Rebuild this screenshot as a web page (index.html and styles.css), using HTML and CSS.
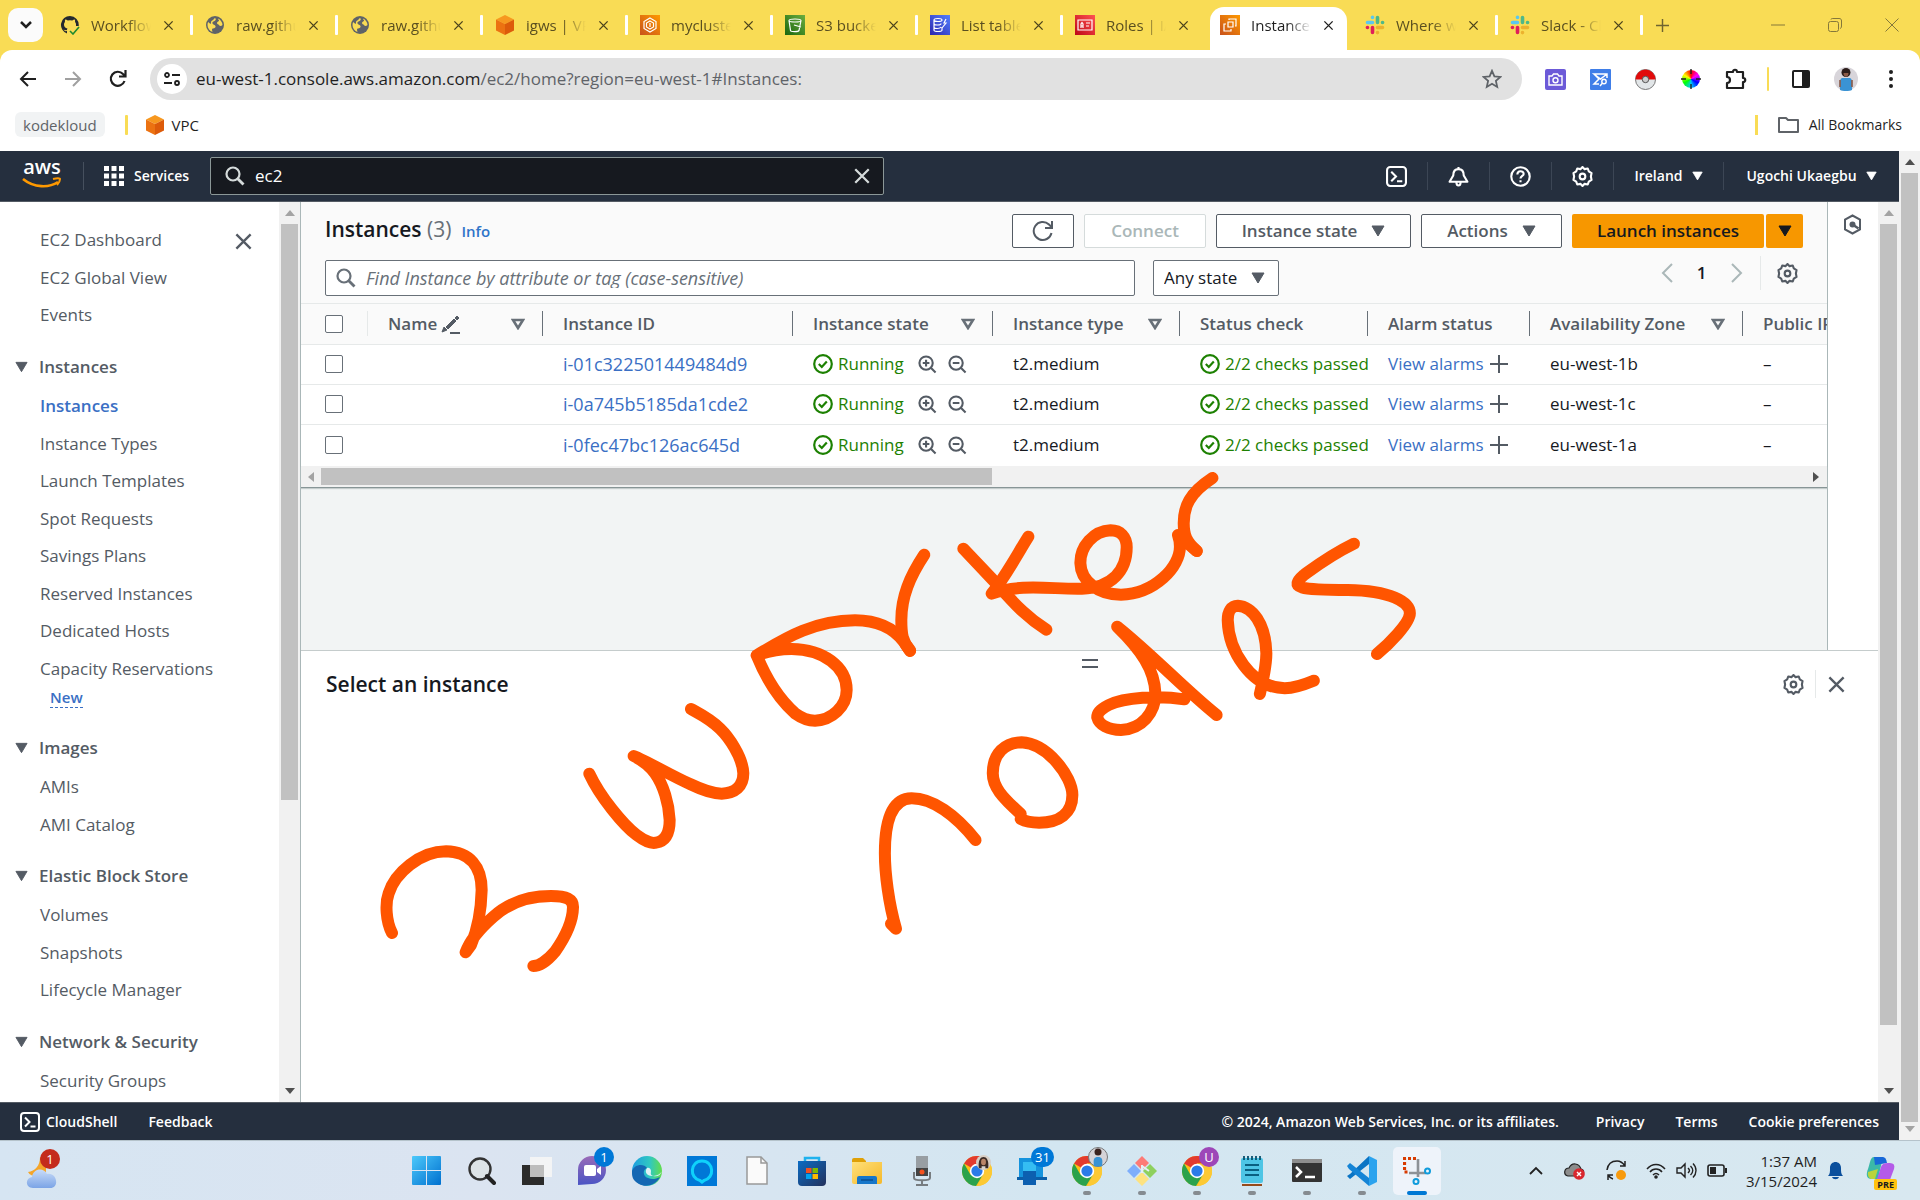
FILE: index.html
```html
<!DOCTYPE html>
<html lang="en">
<head>
<meta charset="utf-8">
<title>Instances | EC2 | eu-west-1</title>
<link rel="stylesheet" href="styles.css">
</head>
<body>
<svg class="defs" aria-hidden="true">
  <defs>
    <linearGradient id="orange" x1="0" y1="1" x2="1" y2="0"><stop offset="0" stop-color="#c8511b"/><stop offset="1" stop-color="#f90"/></linearGradient>
    <linearGradient id="green" x1="0" y1="1" x2="1" y2="0"><stop offset="0" stop-color="#1b660f"/><stop offset="1" stop-color="#6cae3e"/></linearGradient>
    <linearGradient id="blue" x1="0" y1="1" x2="1" y2="0"><stop offset="0" stop-color="#2e27ad"/><stop offset="1" stop-color="#527fff"/></linearGradient>
    <linearGradient id="red" x1="0" y1="1" x2="1" y2="0"><stop offset="0" stop-color="#bd0816"/><stop offset="1" stop-color="#ff5252"/></linearGradient>
    <linearGradient id="win" x1="0" y1="0" x2="1" y2="1"><stop offset="0" stop-color="#4cc9fb"/><stop offset="1" stop-color="#0070cf"/></linearGradient>
    <linearGradient id="violet" x1="0" y1="0" x2="0" y2="1"><stop offset="0" stop-color="#9a6bb8"/><stop offset="1" stop-color="#4a54c4"/></linearGradient>
    <linearGradient id="edgeG" x1="0" y1="0" x2="1" y2="0"><stop offset="0" stop-color="#1b9de2"/><stop offset=".6" stop-color="#31c8c0"/><stop offset="1" stop-color="#63dd4a"/></linearGradient>
    <linearGradient id="bag" x1="0" y1="0" x2="1" y2="1"><stop offset="0" stop-color="#0a6cc4"/><stop offset="1" stop-color="#24315c"/></linearGradient>
    <linearGradient id="folderG" x1="0" y1="0" x2="1" y2="1"><stop offset="0" stop-color="#ffe07a"/><stop offset="1" stop-color="#f5b82a"/></linearGradient>
    <linearGradient id="cloudG" x1="0" y1="0" x2="0" y2="1"><stop offset="0" stop-color="#c9dcf8"/><stop offset="1" stop-color="#7ba4e6"/></linearGradient>
    <symbol id="close" viewBox="0 0 16 16"><path d="M2 2l12 12M14 2L2 14" fill="none" stroke="currentColor" stroke-width="2"/></symbol>
    <symbol id="down" viewBox="0 0 14 12"><path d="M1 1h12L7 11z" fill="currentColor" stroke="currentColor" stroke-width="1" stroke-linejoin="round"/></symbol>
    <symbol id="sort" viewBox="0 0 14 12"><path d="M2 2h10L7 10z" fill="none" stroke="currentColor" stroke-width="2.600"/></symbol>
    <symbol id="scroll-up" viewBox="0 0 10 6"><path d="M0 6L5 0l5 6z" fill="currentColor"/></symbol>
    <symbol id="search" viewBox="0 0 20 20"><circle cx="8" cy="8" r="6.500" fill="none" stroke="currentColor" stroke-width="2.200"/><path d="M12.500 12.500L18.500 18.500" stroke="currentColor" stroke-width="2.800"/></symbol>
    <symbol id="gear" viewBox="0 0 20 20"><path d="M10 1l2 2 3-.6 1 2.800 2.600 1.600L18 10l.6 3.200-2.600 1.600-1 2.800-3-.6-2 2-2-2-3 .6-1-2.800-2.600-1.600L2 10l-.6-3.200L4 5.200l1-2.800 3 .6z" fill="none" stroke="currentColor" stroke-width="2" stroke-linejoin="round"/><circle cx="10" cy="10" r="2.700" fill="none" stroke="currentColor" stroke-width="2"/></symbol>
    <symbol id="shell" viewBox="0 0 20 20"><rect x="1" y="1" width="18" height="18" rx="3" fill="none" stroke="currentColor" stroke-width="2"/><path d="M5 5.500l4.500 4.500L5 14.500M10.500 14.500h5" fill="none" stroke="currentColor" stroke-width="2"/></symbol>
    <symbol id="ok" viewBox="0 0 20 20"><circle cx="10" cy="10" r="8.800" fill="none" stroke="currentColor" stroke-width="2.200"/><path d="M5.800 10l3 3 5-5.500" fill="none" stroke="currentColor" stroke-width="2.200"/></symbol>
    <symbol id="zin" viewBox="0 0 20 20"><circle cx="8.500" cy="8.500" r="7" fill="none" stroke="currentColor" stroke-width="2.200"/><path d="M13.500 13.500l5 5M5 8.500h7M8.500 5v7" stroke="currentColor" stroke-width="2.200"/></symbol>
    <symbol id="zout" viewBox="0 0 20 20"><circle cx="8.500" cy="8.500" r="7" fill="none" stroke="currentColor" stroke-width="2.200"/><path d="M13.500 13.500l5 5M5 8.500h7" stroke="currentColor" stroke-width="2.200"/></symbol>
    <symbol id="plus" viewBox="0 0 18 18"><path d="M9 0v18M0 9h18" stroke="currentColor" stroke-width="2"/></symbol>
    <symbol id="globe" viewBox="0 0 20 20"><circle cx="10" cy="10" r="9" fill="#5f6368"/><path d="M9.500 3.200c2 0 1.500 2 0 2.800S7 7 7.500 8.500 10 9.500 10.500 11s-1 2.500-2.500 2.500-1 2-.5 3.500c-3-1-5-4-5-7 0-1 .2-2 .6-3L5.500 9c1-1 0-2 1-3s2-1 3-2.800zM13 3.500c2.500 1 4.500 4 4.500 6.500-1.500 1.500-3 1-3.500 0s-2-.5-2-2 1.500-1.500 2-2-1-1.500-1-2.500z" fill="#f9dc55"/></symbol>
    <symbol id="cube" viewBox="0 0 20 20"><path d="M10 0l9 4.500L10 9 1 4.500z" fill="#f7981f"/><path d="M1 4.500L10 9v11l-9-4.500z" fill="#ec7211"/><path d="M19 4.500L10 9v11l9-4.500z" fill="#dd5b0a"/></symbol>
    <symbol id="slack" viewBox="0 0 20 20"><g stroke-width="3.600" stroke-linecap="round"><path d="M2.500 7.500h5M7.500 2.300v.2" stroke="#5bc8ef"/><path d="M12.500 2.500v5M17.500 7.500h.1" stroke="#4fb888"/><path d="M12.500 12.500h5M12.500 17.500v.1" stroke="#ecb22e"/><path d="M7.500 12.500v5M2.400 12.500h.1" stroke="#e01e5a"/></g></symbol>
    <symbol id="chrome" viewBox="0 0 30 30"><circle cx="15" cy="15" r="15" fill="#fbc116"/><path d="M15 15L2 7.500A15 15 0 0 1 28 7.500H15z" fill="#e33b2e"/><path d="M2 7.500A15 15 0 0 0 14 30l7-11.500L15 15 8.500 18.700z" fill="#2ba24c"/><path d="M28 7.500H15l6.500 11L15 30A15 15 0 0 0 28 7.500z" fill="#fcc934"/><circle cx="15" cy="15" r="7.200" fill="#fff"/><circle cx="15" cy="15" r="5.600" fill="#2a7be8"/></symbol>
  </defs>
</svg>

<header class="browser">
  <div class="tabstrip">
    <button class="tab-menu" aria-label="Search tabs"><svg width="12" height="8" viewBox="0 0 12 8"><path d="M1 1l5 5 5-5" fill="none" stroke="#1f1f1f" stroke-width="2.500"/></svg></button>
    <div class="tabs">
      <div class="tab"><svg class="fav" viewBox="0 0 20 20"><path d="M10 1a9 9 0 0 0-3 17.500V16c-2 .5-3-.5-3.500-1.500 1 .3 2 1 3.500.5 0-.8.200-1.200.5-1.500C5 13 4 11.500 4 9.500c0-1 .3-1.900 1-2.500-.2-.8-.1-1.700.2-2.500 1 0 1.800.5 2.500 1a9 9 0 0 1 4.600 0c.7-.5 1.500-1 2.500-1 .3.800.4 1.700.2 2.500.7.600 1 1.500 1 2.500v1.500h2.700A9 9 0 0 0 10 1z" fill="#24292f"/><path d="M10 16l3 3 6-7" fill="none" stroke="#1f8a2f" stroke-width="1.600"/></svg><span class="tab-title">Workflow runs</span><button class="tab-x" aria-label="Close tab"><svg width="11" height="11"><use href="#close"/></svg></button></div>
      <div class="tab"><svg class="fav"><use href="#globe"/></svg><span class="tab-title">raw.githubuser</span><button class="tab-x" aria-label="Close tab"><svg width="11" height="11"><use href="#close"/></svg></button></div>
      <div class="tab"><svg class="fav"><use href="#globe"/></svg><span class="tab-title">raw.githubuser</span><button class="tab-x" aria-label="Close tab"><svg width="11" height="11"><use href="#close"/></svg></button></div>
      <div class="tab"><svg class="fav"><use href="#cube"/></svg><span class="tab-title">igws | VPC</span><button class="tab-x" aria-label="Close tab"><svg width="11" height="11"><use href="#close"/></svg></button></div>
      <div class="tab"><svg class="fav" viewBox="0 0 20 20"><path d="M0 0h20v20H0z" fill="url(#orange)"/><path d="M10 3l6 3.500v7L10 17l-6-3.500v-7zM10 6l3.500 2v4L10 14l-3.500-2V8zM10 8v4" fill="none" stroke="#fff" stroke-width="1.200"/></svg><span class="tab-title">mycluster</span><button class="tab-x" aria-label="Close tab"><svg width="11" height="11"><use href="#close"/></svg></button></div>
      <div class="tab"><svg class="fav" viewBox="0 0 20 20"><path d="M0 0h20v20H0z" fill="url(#green)"/><path d="M4 5.500c0-2 12-2 12 0s-12 2-12 0l1.500 10c0 1.500 8 1.500 8.500 0l2-10M9 10l7 2" fill="none" stroke="#fff" stroke-width="1.200"/></svg><span class="tab-title">S3 buckets</span><button class="tab-x" aria-label="Close tab"><svg width="11" height="11"><use href="#close"/></svg></button></div>
      <div class="tab"><svg class="fav" viewBox="0 0 20 20"><path d="M0 0h20v20H0z" fill="url(#blue)"/><path d="M4 5c0-2 8-2 8 0s-8 2-8 0v10c0 2 8 2 8 0v-3M4 8.500c0 2 7 2 7 0M4 12c0 2 6 2 7 0M16 4l-2 4h2l-4 5" fill="none" stroke="#fff" stroke-width="1.200"/></svg><span class="tab-title">List tables</span><button class="tab-x" aria-label="Close tab"><svg width="11" height="11"><use href="#close"/></svg></button></div>
      <div class="tab before-active"><svg class="fav" viewBox="0 0 20 20"><path d="M0 0h20v20H0z" fill="url(#red)"/><path d="M3 5h14v10H3zM6 13v-4l1-1.500L8 9v4M6 11h2M11 8h4M11 11h3" fill="none" stroke="#fff" stroke-width="1.200"/></svg><span class="tab-title">Roles | IAM</span><button class="tab-x" aria-label="Close tab"><svg width="11" height="11"><use href="#close"/></svg></button></div>
      <div class="tab active"><svg class="fav" viewBox="0 0 20 20"><path d="M0 0h20v20H0z" fill="url(#orange)"/><path d="M8 7h5v5H8zM6 9H4v7h7v-2M9 5V4h7v7h-1" fill="none" stroke="#fff" stroke-width="1.200"/></svg><span class="tab-title">Instances</span><button class="tab-x" aria-label="Close tab"><svg width="11" height="11"><use href="#close"/></svg></button></div>
      <div class="tab"><svg class="fav"><use href="#slack"/></svg><span class="tab-title">Where work</span><button class="tab-x" aria-label="Close tab"><svg width="11" height="11"><use href="#close"/></svg></button></div>
      <div class="tab"><svg class="fav"><use href="#slack"/></svg><span class="tab-title">Slack - Cloud</span><button class="tab-x" aria-label="Close tab"><svg width="11" height="11"><use href="#close"/></svg></button></div>
    </div>
    <button class="new-tab" aria-label="New tab"><svg width="13" height="13" viewBox="0 0 18 18"><use href="#plus"/></svg></button>
    <div class="window-controls">
      <button aria-label="Minimise"><svg width="14" height="14" viewBox="0 0 14 14"><path d="M0 7h14" stroke="currentColor"/></svg></button>
      <button aria-label="Restore"><svg width="14" height="14" viewBox="0 0 14 14"><rect x=".5" y="3.500" width="10" height="10" rx="2" fill="none" stroke="currentColor"/><path d="M3 1.500c0-1 1-1 2-1h6c2 0 2.500 1 2.500 2.500v5c0 2-1 2.500-1.500 2.500" fill="none" stroke="currentColor"/></svg></button>
      <button aria-label="Close"><svg width="14" height="14" viewBox="0 0 14 14"><path d="M.5.5l13 13M13.500.5l-13 13" stroke="currentColor"/></svg></button>
    </div>
  </div>

  <div class="toolbar">
    <div class="nav-buttons">
      <button aria-label="Back"><svg width="18" height="18" viewBox="0 0 18 18"><path d="M17 9H2M9 2L2 9l7 7" fill="none" stroke="#1f1f1f" stroke-width="2"/></svg></button>
      <button aria-label="Forward"><svg width="18" height="18" viewBox="0 0 18 18"><path d="M1 9h15M9 2l7 7-7 7" fill="none" stroke="#a0a0a0" stroke-width="2"/></svg></button>
      <button aria-label="Reload"><svg width="18" height="18" viewBox="0 0 18 18"><path d="M15.500 11A7 7 0 1 1 14 4l2 2M16.500 0v6.500H10" fill="none" stroke="#1f1f1f" stroke-width="2.200"/></svg></button>
    </div>
    <div class="omnibox">
      <button class="site-info" aria-label="Site information"><svg width="16" height="14" viewBox="0 0 16 14"><g fill="none" stroke="#1f1f1f" stroke-width="1.800"><circle cx="3" cy="3" r="2"/><circle cx="13" cy="11" r="2"/><path d="M8 3h8M0 11h8"/></g></svg></button>
      <a class="url" href="#"><span class="host">eu-west-1.console.aws.amazon.com</span>/ec2/home?region=eu-west-1#Instances:</a>
      <button class="star" aria-label="Bookmark"><svg width="20" height="20" viewBox="0 0 20 20"><path d="M10 1.800l2.400 5.600 6 .5-4.500 4 1.300 6L10 14.700 4.800 17.900l1.300-6-4.500-4 6-.5z" fill="none" stroke="#5f6368" stroke-width="1.800"/></svg></button>
    </div>
    <div class="extensions">
      <button aria-label="Screen capture"><svg width="21" height="21" viewBox="0 0 21 21"><rect width="21" height="21" rx="2" fill="#6c5ad8"/><path d="M4 7h3l1.500-2h4L14 7h3v9H4z" fill="none" stroke="#fff" stroke-width="1.400"/><circle cx="10.500" cy="11.300" r="2.500" fill="none" stroke="#fff" stroke-width="1.400"/></svg></button>
      <button aria-label="Mail finder"><svg width="21" height="21" viewBox="0 0 21 21"><rect width="21" height="21" rx="1" fill="#3f7ee8"/><path d="M17 9V5H4l6.500 5L17 5M4 5l5 5-5 5h5" fill="none" stroke="#fff" stroke-width="1.500"/><circle cx="14" cy="12.500" r="2.200" fill="none" stroke="#fff" stroke-width="1.400"/><path d="M12.500 14L10 17" stroke="#fff" stroke-width="1.400"/></svg></button>
      <button aria-label="Pokeball"><svg width="21" height="21" viewBox="0 0 21 21"><circle cx="10.500" cy="10.500" r="10" fill="#e2e6e8" stroke="#777"/><path d="M.5 10.500a10 10 0 0 1 20 0z" fill="#e10b0b"/><circle cx="10.500" cy="10.500" r="3.200" fill="#ccc" stroke="#555"/></svg></button>
      <button aria-label="Color picker"><span class="wheel"></span><svg class="ticks" width="20" height="20" viewBox="0 0 20 20"><path d="M10 0v5M10 15v5M0 10h5M15 10h5" stroke="#222" stroke-width="1.400"/></svg></button>
      <button aria-label="Extensions"><svg width="22" height="22" viewBox="0 0 22 22"><path d="M2 4h6c0-3 4-3 4 0h6v6c3 0 3 4 0 4v6H2v-5c4 0 4-6 0-6z" fill="none" stroke="#1f1f1f" stroke-width="2.200" stroke-linejoin="round"/></svg></button>
      <i class="rule"></i>
      <button aria-label="Side panel"><svg width="18" height="18" viewBox="0 0 18 18"><rect x="1" y="1" width="16" height="16" rx="1" fill="#fff" stroke="#1f1f1f" stroke-width="2"/><path d="M10 1h7v16h-7z" fill="#1f1f1f"/></svg></button>
      <button aria-label="Profile"><svg width="24" height="24" viewBox="0 0 24 24"><circle cx="12" cy="12" r="12" fill="#d8d5da"/><path d="M6 23c0-6-1-11 2-12h8c3 1 2 6 2 12-3 1.300-9 1.300-12 0z" fill="#3a93d4"/><circle cx="12" cy="5.500" r="4.500" fill="#2c1d1b"/><path d="M9.500 6c0 5 5 5 5 0z" fill="#8c5a46"/><path d="M6 13v7M18 13v7" stroke="#8c5a46" stroke-width="1.600"/></svg></button>
      <button aria-label="Menu"><svg width="4" height="18" viewBox="0 0 4 18"><g fill="#1f1f1f"><circle cx="2" cy="2" r="2"/><circle cx="2" cy="9" r="2"/><circle cx="2" cy="16" r="2"/></g></svg></button>
    </div>
  </div>

  <nav class="bookmarks">
    <a class="chip" href="#">kodekloud</a>
    <i class="rule"></i>
    <a href="#"><svg width="20" height="20"><use href="#cube"/></svg>VPC</a>
    <a class="all" href="#"><svg width="21" height="16" viewBox="0 0 21 16"><path d="M1 1h7l2 2h10v12H1z" fill="none" stroke="#5f6368" stroke-width="2" stroke-linejoin="round"/></svg>All Bookmarks</a>
  </nav>
</header>

<div class="viewport">
  <div class="page">
    <nav class="aws-nav">
      <a class="aws-logo" href="#" aria-label="AWS home"><span>aws</span><svg width="40" height="12" viewBox="0 0 40 12"><path d="M1 2c11 9 26 9 35 3" fill="none" stroke="#f90" stroke-width="2.600"/><path d="M31 2c4-1 7-1 7 0s-1 4-3 6" fill="none" stroke="#f90" stroke-width="2"/></svg></a>
      <button class="services"><svg width="20" height="20" viewBox="0 0 20 20"><path d="M0 0h5v5H0zM7.500 0h5v5h-5zM15 0h5v5h-5zM0 7.500h5v5H0zM7.500 7.500h5v5h-5zM15 7.500h5v5h-5zM0 15h5v5H0zM7.500 15h5v5h-5zM15 15h5v5h-5z" fill="#fff"/></svg>Services</button>
      <div class="aws-search"><svg width="20" height="20"><use href="#search"/></svg><input type="text" value="ec2" aria-label="Search"><button aria-label="Clear"><svg width="18" height="18"><use href="#close"/></svg></button></div>
      <div class="aws-tools">
        <button aria-label="CloudShell"><svg width="21" height="21"><use href="#shell"/></svg></button>
        <button aria-label="Notifications"><svg width="21" height="21" viewBox="0 0 20 20"><path d="M10 1v2M10 3c-4 0-5 3-5 6l-3.500 6h17L15 9c0-3-1-6-5-6zM8 15.500c0 4 4 4 4 0" fill="none" stroke="#fff" stroke-width="2" stroke-linejoin="round"/></svg></button>
        <button aria-label="Help"><svg width="21" height="21" viewBox="0 0 20 20"><circle cx="10" cy="10" r="8.800" fill="none" stroke="#fff" stroke-width="2"/><path d="M7 8c0-4 6-4 6-.5 0 2-3 2-3 4.500M10 13.500v2" fill="none" stroke="#fff" stroke-width="2"/></svg></button>
        <button aria-label="Settings"><svg width="21" height="21"><use href="#gear"/></svg></button>
        <button class="region">Ireland<svg width="11" height="10"><use href="#down"/></svg></button>
        <button class="account">Ugochi Ukaegbu<svg width="11" height="10"><use href="#down"/></svg></button>
      </div>
    </nav>

    <div class="console">
      <aside class="sidebar">
        <div class="side-scroll">
          <button class="side-x" aria-label="Close navigation"><svg width="19" height="19"><use href="#close"/></svg></button>
          <ul>
            <li><a href="#">EC2 Dashboard</a></li>
            <li><a href="#">EC2 Global View</a></li>
            <li><a href="#">Events</a></li>
          </ul>
          <h2><svg width="13" height="12"><use href="#down"/></svg>Instances</h2>
          <ul>
            <li><a class="current" href="#">Instances</a></li>
            <li><a href="#">Instance Types</a></li>
            <li><a href="#">Launch Templates</a></li>
            <li><a href="#">Spot Requests</a></li>
            <li><a href="#">Savings Plans</a></li>
            <li><a href="#">Reserved Instances</a></li>
            <li><a href="#">Dedicated Hosts</a></li>
            <li><a href="#">Capacity Reservations</a></li>
          </ul>
          <div class="new"><a href="#">New</a></div>
          <h2><svg width="13" height="12"><use href="#down"/></svg>Images</h2>
          <ul>
            <li><a href="#">AMIs</a></li>
            <li><a href="#">AMI Catalog</a></li>
          </ul>
          <h2><svg width="13" height="12"><use href="#down"/></svg>Elastic Block Store</h2>
          <ul>
            <li><a href="#">Volumes</a></li>
            <li><a href="#">Snapshots</a></li>
            <li><a href="#">Lifecycle Manager</a></li>
          </ul>
          <h2><svg width="13" height="12"><use href="#down"/></svg>Network &amp; Security</h2>
          <ul>
            <li><a href="#">Security Groups</a></li>
          </ul>
        </div>
        <div class="vbar"><svg class="arrow dim" width="10" height="6"><use href="#scroll-up"/></svg><i class="thumb thumb-side"></i><svg class="arrow flip" width="10" height="6"><use href="#scroll-up"/></svg></div>
      </aside>

      <main class="content">
        <div class="upper">
          <section class="panel">
            <div class="panel-head">
              <h1>Instances <span>(3)</span></h1>
              <a class="info" href="#">Info</a>
              <div class="actions">
                <button class="btn refresh" aria-label="Refresh"><svg width="22" height="22" viewBox="0 0 22 22"><path d="M19.500 13A9 9 0 1 1 17 4.500l3 3M20 1v7h-7" fill="none" stroke="currentColor" stroke-width="2"/></svg></button>
                <button class="btn connect" disabled>Connect</button>
                <button class="btn state">Instance state<svg width="14" height="12"><use href="#down"/></svg></button>
                <button class="btn act">Actions<svg width="14" height="12"><use href="#down"/></svg></button>
                <div class="split-btn"><button class="btn primary launch">Launch instances</button><button class="btn primary more" aria-label="More launch options"><svg width="14" height="12"><use href="#down"/></svg></button></div>
              </div>
            </div>
            <div class="filters">
              <label class="find"><svg width="20" height="20"><use href="#search"/></svg><input type="text" placeholder="Find Instance by attribute or tag (case-sensitive)" aria-label="Find Instance"></label>
              <label class="any"><select aria-label="State filter"><option>Any state</option></select><svg width="14" height="12"><use href="#down"/></svg></label>
              <div class="pager">
                <button aria-label="Previous page"><svg width="12" height="20" viewBox="0 0 12 20"><path d="M11 1L2 10l9 9" fill="none" stroke="#aab7b8" stroke-width="2"/></svg></button>
                <button class="num">1</button>
                <button aria-label="Next page"><svg width="12" height="20" viewBox="0 0 12 20"><path d="M1 1l9 9-9 9" fill="none" stroke="#aab7b8" stroke-width="2"/></svg></button>
                <button class="prefs" aria-label="Preferences"><svg width="21" height="21"><use href="#gear"/></svg></button>
              </div>
            </div>
            <div class="table-wrap">
              <table>
                <colgroup><col class="c0"><col class="c1"><col class="c2"><col class="c3"><col class="c4"><col class="c5"><col class="c6"><col class="c7"><col class="c8"></colgroup>
                <thead><tr>
                  <th class="pick"><div><input type="checkbox" aria-label="Select all"></div></th>
                  <th><div><span>Name</span><svg class="pen" width="19" height="20" viewBox="0 0 19 20"><path d="M1 18l2-5 3 3zM5 13l8-8 2 2-8 8zM14 4l2-2 2 2-2 2z" fill="currentColor" stroke="currentColor" stroke-linejoin="round"/><path d="M9 19h10" stroke="currentColor" stroke-width="2"/></svg><svg class="sort" width="14" height="12"><use href="#sort"/></svg></div></th>
                  <th><div>Instance ID</div></th>
                  <th><div>Instance state<svg class="sort" width="14" height="12"><use href="#sort"/></svg></div></th>
                  <th><div>Instance type<svg class="sort" width="14" height="12"><use href="#sort"/></svg></div></th>
                  <th><div>Status check</div></th>
                  <th><div>Alarm status</div></th>
                  <th><div>Availability Zone<svg class="sort" width="14" height="12"><use href="#sort"/></svg></div></th>
                  <th><div>Public IPv4 DNS</div></th>
                </tr></thead>
                <tbody>
                  <tr><td class="pick"><input type="checkbox" aria-label="Select i-01c322501449484d9"></td><td></td><td class="id"><a href="#">i-01c322501449484d9</a></td>
                    <td><div class="cell good"><svg width="20" height="20"><use href="#ok"/></svg>Running<svg class="z" width="19" height="19"><use href="#zin"/></svg><svg class="z" width="19" height="19"><use href="#zout"/></svg></div></td>
                    <td>t2.medium</td><td><div class="cell good"><svg width="20" height="20"><use href="#ok"/></svg>2/2 checks passed</div></td>
                    <td><div class="cell"><a href="#">View alarms</a><svg class="p" width="18" height="18"><use href="#plus"/></svg></div></td><td>eu-west-1b</td><td>–</td></tr>
                  <tr><td class="pick"><input type="checkbox" aria-label="Select i-0a745b5185da1cde2"></td><td></td><td class="id"><a href="#">i-0a745b5185da1cde2</a></td>
                    <td><div class="cell good"><svg width="20" height="20"><use href="#ok"/></svg>Running<svg class="z" width="19" height="19"><use href="#zin"/></svg><svg class="z" width="19" height="19"><use href="#zout"/></svg></div></td>
                    <td>t2.medium</td><td><div class="cell good"><svg width="20" height="20"><use href="#ok"/></svg>2/2 checks passed</div></td>
                    <td><div class="cell"><a href="#">View alarms</a><svg class="p" width="18" height="18"><use href="#plus"/></svg></div></td><td>eu-west-1c</td><td>–</td></tr>
                  <tr><td class="pick"><input type="checkbox" aria-label="Select i-0fec47bc126ac645d"></td><td></td><td class="id"><a href="#">i-0fec47bc126ac645d</a></td>
                    <td><div class="cell good"><svg width="20" height="20"><use href="#ok"/></svg>Running<svg class="z" width="19" height="19"><use href="#zin"/></svg><svg class="z" width="19" height="19"><use href="#zout"/></svg></div></td>
                    <td>t2.medium</td><td><div class="cell good"><svg width="20" height="20"><use href="#ok"/></svg>2/2 checks passed</div></td>
                    <td><div class="cell"><a href="#">View alarms</a><svg class="p" width="18" height="18"><use href="#plus"/></svg></div></td><td>eu-west-1a</td><td>–</td></tr>
                </tbody>
              </table>
            </div>
            <div class="hbar"><svg class="left dim" width="6" height="10" viewBox="0 0 6 10"><path d="M6 0L0 5l6 5z" fill="currentColor"/></svg><i></i><svg class="right" width="6" height="10" viewBox="0 0 6 10"><path d="M0 0l6 5-6 5z" fill="currentColor"/></svg></div>
          </section>
          <div class="tools-strip"><button aria-label="Tools"><svg width="19" height="21" viewBox="0 0 19 21"><path d="M9.500 1.500l7.500 4v10l-7.500 4-7.500-4v-10z" fill="none" stroke="currentColor" stroke-width="2"/><path d="M9.500 10.500l6 4" stroke="currentColor" stroke-width="2.500"/><circle cx="9.500" cy="10.500" r="3" fill="currentColor"/></svg></button></div>
        </div>
        <section class="split">
          <div class="handle"></div>
          <div class="split-head">
            <h2>Select an instance</h2>
            <button class="split-gear" aria-label="Panel preferences"><svg width="21" height="21"><use href="#gear"/></svg></button>
            <button class="split-x" aria-label="Close panel"><svg width="19" height="19"><use href="#close"/></svg></button>
          </div>
        </section>
      </main>
      <div class="vbar"><svg class="arrow dim" width="10" height="6"><use href="#scroll-up"/></svg><i class="thumb thumb-main"></i><svg class="arrow flip" width="10" height="6"><use href="#scroll-up"/></svg></div>
    </div>

    <footer class="aws-footer">
      <a class="shell" href="#"><svg width="20" height="20"><use href="#shell"/></svg>CloudShell</a>
      <a href="#">Feedback</a>
      <span class="copy">© 2024, Amazon Web Services, Inc. or its affiliates.</span>
      <a href="#">Privacy</a><a href="#">Terms</a><a href="#">Cookie preferences</a>
    </footer>
  </div>
  <div class="vbar"><svg class="arrow" width="10" height="6"><use href="#scroll-up"/></svg><i class="thumb thumb-page"></i><svg class="arrow flip dim" width="10" height="6"><use href="#scroll-up"/></svg></div>
</div>

<footer class="taskbar">
  <button class="weather" aria-label="Weather"><svg width="32" height="36" viewBox="0 0 32 36"><path d="M14 4c0 9-5 14-12 15 3 6 14 5 18 1V6z" fill="#f4a52a"/><path d="M7 35c-8 0-8-10-1-11 1-9 12-10 15-3 10-2 13 14 3 14z" fill="url(#cloudG)"/></svg><span class="badge red">1</span></button>
  <div class="apps">
    <button aria-label="Start"><svg width="29" height="29" viewBox="0 0 29 29"><path d="M0 1q0-1 1-1h13v14H0zM15 0h13q1 0 1 1v13H15zM0 15h14v14H1q-1 0-1-1zM15 15h14v13q0 1-1 1H15z" fill="url(#win)"/></svg></button>
    <button aria-label="Search"><svg width="28" height="28" viewBox="0 0 28 28"><circle cx="12" cy="12" r="10.500" fill="#dde3e6" stroke="#333" stroke-width="2.400"/><path d="M19 19l7 7" stroke="#222" stroke-width="4" stroke-linecap="round"/></svg></button>
    <button aria-label="Task view"><svg width="30" height="28" viewBox="0 0 30 28"><path d="M0 8h22v20H0z" fill="#2b2b2b"/><path d="M8 0h22v20H8z" fill="#f3f4f5"/><path d="M8 8h14v12H8z" fill="#bdbdbd"/></svg></button>
    <button aria-label="Chat"><svg width="30" height="29" viewBox="0 0 30 29"><path d="M1 29V14A14 14 0 1 1 15 28z" fill="url(#violet)"/><rect x="7" y="9" width="12" height="11" rx="2" fill="#fff"/><path d="M20 13l4-3v9l-4-3z" fill="#fff"/></svg><span class="badge blue">1</span></button>
    <button aria-label="Edge"><svg width="30" height="30" viewBox="0 0 30 30"><circle cx="15" cy="15" r="15" fill="url(#edgeG)"/><path d="M0 15c2-7 12-8 15-3-4 1-5 8 1 10 4 2 8 1 12-1-4 8-14 11-21 7S0 20 0 15z" fill="#1467b3"/><path d="M15 12c-3 4 0 8 5 8 8 0 10-5 10-5-2 5-5 6-9 5-3-1-2-3-2-5 0-2-2-4-4-3z" fill="#dff1f5"/></svg></button>
    <button aria-label="Alexa"><svg width="30" height="30" viewBox="0 0 30 30"><path d="M0 0h30v30H0z" fill="#0078d7"/><path d="M13 24.500C2 22 3 5 15 5s13 17 2 19.500L15 26z" fill="none" stroke="#0fd2fb" stroke-width="3"/></svg></button>
    <button aria-label="Document"><svg width="22" height="29" viewBox="0 0 22 29"><path d="M1 1h14l6 6v21H1z" fill="#fafafa" stroke="#999" stroke-width="1.500"/><path d="M15 1v6h6" fill="none" stroke="#999" stroke-width="1.500"/></svg></button>
    <button aria-label="Store"><svg width="30" height="30" viewBox="0 0 30 30"><path d="M8 7V2h14v5" fill="none" stroke="#1fb2ee" stroke-width="2.500"/><path d="M1 5h28v21q0 4-4 4H5q-4 0-4-4z" fill="url(#bag)"/><path d="M9 12h5.500v5H9z" fill="#f25022"/><path d="M15.500 12H21v5h-5.500z" fill="#7fba00"/><path d="M9 18h5.500v5H9z" fill="#00a4ef"/><path d="M15.500 18H21v5h-5.500z" fill="#ffb900"/></svg></button>
    <button aria-label="File explorer"><svg width="30" height="28" viewBox="0 0 30 28"><path d="M0 3q0-2 2-2h9l3 3v5H0z" fill="#dfa007"/><path d="M0 5h30v20q0 2-2 2H2q-2 0-2-2z" fill="url(#folderG)"/><path d="M5 27v-6q0-2 2-2h16q2 0 2 2v6z" fill="#1676c9"/><path d="M9 23h12" stroke="#0b4f91" stroke-width="1.500"/></svg></button>
    <button aria-label="Voice recorder"><svg width="18" height="30" viewBox="0 0 18 30"><rect x="3" width="12" height="20" fill="#989ea3"/><path d="M3 12h12v8H3z" fill="#444"/><circle cx="9" cy="16" r="2.500" fill="#f4511e"/><path d="M1 16v6c0 3 16 3 16 0v-6M9 24v5M3 29h12" fill="none" stroke="#777c80" stroke-width="2"/></svg></button>
    <button aria-label="Chrome"><svg width="30" height="30"><use href="#chrome"/></svg><svg class="face" width="15" height="15" viewBox="0 0 16 16"><circle cx="8" cy="8" r="8" fill="#d8cfc6"/><path d="M3 14C2 5 5 2 8 2s6 3 5 12z" fill="#3b2a25"/><ellipse cx="8" cy="7.500" rx="2.600" ry="3.500" fill="#b98468"/><path d="M6 12h4v3H6z" fill="#d9d4d0"/></svg></button>
    <button aria-label="Your phone"><svg width="30" height="30" viewBox="0 0 30 30"><path d="M2 2h24v19H2z" fill="#1593dd"/><path d="M0 21h30v3H0z" fill="#0b5ea8"/><path d="M6 6h13v23H6z" fill="#0c5fb0"/><path d="M6 6h13v9H6z" fill="#35bdf2"/></svg><span class="badge blue wide">31</span></button>
    <button class="running" aria-label="Chrome, profile 1"><svg width="30" height="30"><use href="#chrome"/></svg><svg class="face big" width="20" height="20" viewBox="0 0 20 20"><circle cx="10" cy="10" r="9.500" fill="#d5d3d7" stroke="#777"/><path d="M6 19c-1-7 0-9 4-9s5 2 4 9c-2 .7-6 .7-8 0z" fill="#3893d4"/><circle cx="10" cy="5" r="3.500" fill="#3a2420"/></svg></button>
    <button class="running" aria-label="Git"><svg width="30" height="30" viewBox="0 0 30 30"><path d="M15 0l7 7-7 7-7-7z" fill="#fd7b76"/><path d="M7 8l7 7-7 7-7-7z" fill="#7eaefb"/><path d="M15 16l7 7-7 7-7-7z" fill="#fde280"/><path d="M23 8l7 7-7 7-7-7z" fill="#8ed05e"/><path d="M15 9v8M15 10l7 5" stroke="#e3f0f5" stroke-width="2"/></svg></button>
    <button class="running" aria-label="Chrome, profile 2"><svg width="30" height="30"><use href="#chrome"/></svg><span class="badge purple">U</span></button>
    <button class="running" aria-label="Notepad"><svg width="24" height="30" viewBox="0 0 24 30"><rect x="1" y="2" width="22" height="25" rx="2" fill="#4ec5e5"/><path d="M2 29h20" stroke="#964b1c" stroke-width="2"/><path d="M5 9h14M5 14h14M5 19h14" stroke="#0a5f80" stroke-width="1.800"/><path d="M4 0v4M8 0v4M12 0v4M16 0v4M20 0v4" stroke="#07506e" stroke-width="1.800"/></svg></button>
    <button class="running" aria-label="Terminal"><svg width="30" height="23" viewBox="0 0 30 23"><rect width="30" height="23" rx="1" fill="#333"/><path d="M0 0h30v4H0z" fill="#8e8e8e"/><path d="M4 8l5 5-5 5M13 18h10" fill="none" stroke="#fff" stroke-width="2.500"/></svg></button>
    <button class="running" aria-label="Visual Studio Code"><svg width="30" height="30" viewBox="0 0 30 30"><path d="M22 0L3 18 0 20l3 3L22 8z" fill="#0a74c4"/><path d="M0 10l3-3 19 15v8L2 13z" fill="#1484d6"/><path d="M22 0l8 4v22l-8 4z" fill="#2ba3ee"/></svg></button>
    <button class="open" aria-label="Snipping Tool"><svg width="28" height="28" viewBox="0 0 28 28"><path d="M13 1.500H1.500V15h5" fill="none" stroke="#d83b01" stroke-width="3.200" stroke-dasharray="3 2"/><path d="M15 2v18M6 16h17" stroke="#8d9297" stroke-width="2.600"/><circle cx="24.500" cy="14" r="2.500" fill="none" stroke="#0f9bdc" stroke-width="2"/><circle cx="13" cy="24.500" r="2.500" fill="none" stroke="#0f9bdc" stroke-width="2"/></svg></button>
  </div>
  <div class="tray">
    <button aria-label="Hidden icons"><svg width="14" height="9" viewBox="0 0 14 9"><path d="M1 8l6-6 6 6" fill="none" stroke="#222" stroke-width="1.800"/></svg></button>
    <button aria-label="OneDrive"><svg width="21" height="18" viewBox="0 0 21 18"><path d="M4 14c-5-1-4-8 1-8 3-6 10-5 12 1 4 1 3 6 0 7z" fill="#8c8c8c" stroke="#222" stroke-width="1.200"/><circle cx="15" cy="12" r="5.800" fill="#d8272f"/><path d="M13 10l4 4M17 10l-4 4" stroke="#fff" stroke-width="1.400"/></svg></button>
    <button aria-label="Updates"><svg width="22" height="21" viewBox="0 0 22 21"><path d="M1 10C2 3 7 1 11 1s6 2 8 5M19 1v5h-5M7 19c-3-1-5-4-5-4M2 20v-5h5" fill="none" stroke="#222" stroke-width="1.500"/><circle cx="15" cy="15" r="5" fill="#f79a0d"/></svg></button>
    <button aria-label="Wi-Fi"><svg width="20" height="16" viewBox="0 0 20 16"><g fill="none" stroke="#222" stroke-width="1.500"><path d="M1 6c5-6 13-6 18 0M4 9c3-4 9-4 12 0M7 12c2-2 4-2 6 0"/></g><circle cx="10" cy="14" r="1.800" fill="#222"/></svg></button>
    <button aria-label="Volume"><svg width="21" height="17" viewBox="0 0 21 17"><path d="M1 6h4l4-4v13l-4-4H1zM12 6c2 2 2 3 0 5M14.500 4c3 3 3 6 0 9M17 1.500c4 4 4 10 0 14" fill="none" stroke="#222" stroke-width="1.400"/></svg></button>
    <button aria-label="Battery"><svg width="20" height="13" viewBox="0 0 20 13"><rect x="1" y="1" width="16" height="11" rx="2" fill="none" stroke="#222" stroke-width="1.600"/><path d="M3 3h6v7H3zM18 4h2v5h-2z" fill="#222"/></svg></button>
    <button class="clock"><span>1:37 AM</span><span>3/15/2024</span></button>
    <button aria-label="Notifications"><svg width="17" height="19" viewBox="0 0 17 19"><path d="M1 15c2-2 2-4 2-8 0-8 11-8 11 0 0 4 0 6 2 8z" fill="#0a4f9c"/><path d="M5 16h7c-1 3-6 3-7 0z" fill="#0a4f9c"/></svg></button>
    <button class="copilot" aria-label="Copilot"><svg width="30" height="28" viewBox="0 0 30 28"><path d="M8 0h9l-5 22H6C0 22 0 17 2 12S4 0 8 0z" fill="#3bb8a8"/><path d="M8 0h9q3 0 4 6l-12 2z" fill="#1768d8"/><path d="M22 6q8-1 6 6l-3 8q-1 5-6 5h-9l5-15q1-4 7-4z" fill="#b45be8"/><path d="M2 15l10-3-3 10H5q-4-2-3-7z" fill="#b9d43c"/></svg><span class="pre">PRE</span></button>
  </div>
</footer>

<svg class="ink" width="1080" height="520" viewBox="370 470 1080 520" aria-label="3 worker nodes">
  <g fill="none" stroke="#ff5500" stroke-linecap="round" stroke-linejoin="round" stroke-width="12">
    <g transform="translate(370 460) scale(.33333)">
      <path vector-effect="non-scaling-stroke" d="M66 1419C48 1385 45 1330 56 1300 75 1240 150 1174 228 1174 300 1176 335 1220 335 1290 333 1370 318 1420 303 1455L287 1477C300 1440 330 1405 370 1370 420 1325 480 1308 543 1308 590 1308 610 1318 609 1342 608 1390 580 1440 555 1475 530 1505 505 1518 490 1518"/>
      <path vector-effect="non-scaling-stroke" d="M658 941C690 1010 760 1095 800 1125 830 1148 850 1150 858 1148 890 1143 899 1115 899 1080 897 1030 880 975 855 940 835 912 815 900 791 888 830 903 900 945 960 972 1010 996 1035 1001 1055 1001 1095 1000 1120 980 1120 940 1118 890 1075 830 1050 806 1020 776 990 762 963 747"/>
      <path vector-effect="non-scaling-stroke" d="M1160 586C1190 660 1230 720 1275 760 1300 778 1320 782 1335 782 1385 780 1430 740 1430 690 1430 620 1360 568 1265 567 1230 567 1195 573 1160 586 1230 545 1320 482 1455 481 1530 481 1575 510 1602 546L1620 573"/>
    </g>
    <g transform="translate(860 460) scale(.38265 .33333)">
      <path vector-effect="non-scaling-stroke" d="M168 284C130 350 108 410 108 480 108 520 110 545 131 571"/>
      <path vector-effect="non-scaling-stroke" d="M270 266L360 375C410 440 440 475 487 509"/>
      <path vector-effect="non-scaling-stroke" d="M440 230C410 285 380 350 344 401 420 370 500 388 580 386 660 384 697 330 697 262 697 230 680 211 655 211 610 213 575 260 576 310 577 360 620 404 682 404 770 402 838 320 836 258 836 245 834 235 831 225L880 273"/>
      <path vector-effect="non-scaling-stroke" d="M921 54C860 100 846 140 846 190 846 225 852 245 880 273"/>
      <path vector-effect="non-scaling-stroke" d="M81 1391L94 1406C75 1330 65 1240 65 1180 65 1080 85 1016 135 1015 190 1015 250 1065 302 1140"/>
      <path vector-effect="non-scaling-stroke" d="M420 1062C370 1010 347 980 347 940 347 880 380 847 422 847 490 850 555 950 555 1005 555 1060 520 1088 468 1088 448 1088 430 1083 420 1077"/>
      <path vector-effect="non-scaling-stroke" d="M848 718C780 705 690 712 650 735 625 750 620 760 620 772 625 795 650 810 682 810 735 808 772 760 772 700 770 630 735 570 672 500 760 580 850 690 932 765"/>
      <path vector-effect="non-scaling-stroke" d="M1045 702C1055 650 1062 620 1062 580 1060 490 1025 440 987 437 970 437 961 455 961 480 963 570 1020 683 1110 685 1140 684 1165 672 1186 662"/>
      <path vector-effect="non-scaling-stroke" d="M1291 251C1230 285 1190 320 1160 345 1120 385 1150 390 1275 390 1385 392 1437 425 1437 460 1437 490 1380 555 1351 582"/>
    </g>
  </g>
</svg>
</body>
</html>
```
FILE: styles.css
```css
* { box-sizing: border-box; }

body {
  margin: 0;
  height: 100vh;
  display: flex;
  flex-direction: column;
  overflow: hidden;
  position: relative;
  font-family: "Open Sans", "Noto Sans", sans-serif;
  font-size: 17px;
  line-height: 20px;
  color: #16191f;
  background: #fff;
}

button, input, select {
  font: inherit;
  color: inherit;
  background: none;
  border: 0;
  padding: 0;
  margin: 0;
}

button {
  display: flex;
  align-items: center;
  justify-content: center;
  flex: none;
  white-space: nowrap;
}

svg { display: block; flex: none; }
a { text-decoration: none; color: inherit; white-space: nowrap; }
h1, h2, ul { margin: 0; padding: 0; list-style: none; }
.defs { position: absolute; width: 0; height: 0; }

/* Browser chrome */
.browser { flex: none; background: #f9dc55; }

.tabstrip {
  display: flex;
  align-items: center;
  height: 50px;
  padding-left: 8px;
}

.tab-menu { width: 35px; height: 34px; border-radius: 10px; background: #fbfbfb; margin-right: 3px; }
.tabs { display: flex; height: 50px; }

.tab {
  position: relative;
  display: flex;
  align-items: center;
  width: 145px;
  padding-left: 14px;
  font-size: 15px;
  color: #5a4f20;
}

.tab::after {
  content: "";
  position: absolute;
  right: -2px;
  top: 15px;
  width: 3px;
  height: 20px;
  border-radius: 1px;
  background: #fff;
}

.fav { width: 20px; height: 20px; margin-right: 11px; }

.tab-title {
  width: 60px;
  overflow: hidden;
  white-space: nowrap;
  -webkit-mask-image: linear-gradient(90deg, #000 60%, transparent);
  mask-image: linear-gradient(90deg, #000 60%, transparent);
}

.tab-x { width: 24px; height: 24px; margin-left: 5px; color: #4b431c; }
.before-active::after, .active::after { display: none; }

.active { z-index: 1; color: #1f1f1f; }
.active .tab-x { color: #1f1f1f; }
.active::before {
  content: "";
  position: absolute;
  z-index: -1;
  inset: 7px 4px 0 4px;
  border-radius: 14px 14px 0 0;
  background: #fff;
}

.new-tab { width: 24px; height: 24px; margin-left: 9px; color: #6f6430; }
.window-controls { display: flex; margin-left: auto; color: #85783a; }
.window-controls button { width: 57px; height: 48px; }

.toolbar {
  display: flex;
  align-items: center;
  height: 58px;
  padding: 0 7px 0 5px;
  border-radius: 12px 12px 0 0;
  background: #fff;
}

.nav-buttons { display: flex; }
.nav-buttons button { width: 45px; height: 40px; }

.omnibox {
  flex: 1;
  display: flex;
  align-items: center;
  height: 42px;
  margin-left: 10px;
  padding: 0 20px 0 7px;
  border-radius: 21px;
  background: #e1e1e1;
}

.site-info { width: 30px; height: 30px; border-radius: 15px; background: #fff; margin-right: 9px; }
.url { flex: 1; color: #5f6368; font-size: 17px; }
.host { color: #1f1f1f; }

.extensions { display: flex; align-items: center; margin-left: 11px; }
.extensions button { position: relative; width: 45px; height: 40px; }
.rule { width: 3px; height: 24px; background: #f9dc55; border-radius: 1px; }
.extensions .rule { margin: 0 9px; width: 2px; }
.wheel {
  width: 18px;
  height: 18px;
  border-radius: 50%;
  background: conic-gradient(#f00, #f0f, #00f, #0cf, #0f0, #ff0, #f00);
}
.ticks { position: absolute; inset: 0; margin: auto; }

.bookmarks {
  display: flex;
  align-items: center;
  height: 43px;
  padding: 0 18px 10px 15px;
  background: #fff;
  font-size: 15px;
}
.bookmarks a { display: flex; align-items: center; gap: 7px; color: #1f1f1f; }
.bookmarks .chip { height: 25px; padding: 0 8px; border-radius: 6px; background: #f1f3f4; color: #5f6368; }
.bookmarks > .rule { margin: 0 17px 0 20px; height: 20px; }
.bookmarks .all { margin-left: auto; gap: 10px; font-size: 14px; }
.bookmarks .all::before { content: ""; width: 3px; height: 20px; margin-right: 10px; background: #f9dc55; }

/* Scroll bars */
.vbar {
  flex: none;
  display: flex;
  flex-direction: column;
  align-items: center;
  width: 21px;
  background: #f1f1f1;
  color: #505050;
}
.arrow { margin: 8px 0 8px; }
.flip { transform: rotate(180deg); margin-top: auto; }
.dim { color: #a3a3a3; }
.thumb { width: 17px; background: #c1c1c1; }
.thumb-side { height: 64%; }
.thumb-main { height: 89%; }
.thumb-page { height: 96%; }

/* Console */
.viewport { flex: 1; display: flex; min-height: 0; }
.page { flex: 1; min-width: 0; display: flex; flex-direction: column; }

.aws-nav {
  flex: none;
  display: flex;
  align-items: center;
  height: 50px;
  background: #252f3e;
  color: #fff;
  font-size: 14px;
  font-weight: 600;
}

.aws-logo { width: 84px; padding: 2px 0 0 22px; height: 28px; border-right: 1px solid #46505e; }
.aws-logo span { display: block; width: 40px; font-size: 20px; line-height: 14px; text-align: center; font-weight: 600; margin-top: -4px; }
.aws-logo svg { margin-top: 3px; }
.services { gap: 10px; padding: 0 21px 0 20px; }

.aws-search {
  display: flex;
  align-items: center;
  width: 674px;
  height: 38px;
  padding: 0 12px 0 14px;
  border: 1px solid #8b9797;
  border-radius: 2px;
  background: #16191f;
  color: #d5dbdb;
}
.aws-search input { flex: 1; padding-left: 10px; font-size: 17px; font-weight: 400; color: #fff; outline: 0; }

.aws-tools { display: flex; margin-left: auto; }
.aws-tools button { width: 62px; height: 28px; border-right: 1px solid #3c4655; }
.aws-tools .region, .aws-tools .account { gap: 9px; width: 110px; }
.aws-tools .account { width: 175px; border: 0; }

.console { flex: 1; display: flex; min-height: 0; border-top: 1px solid #545b64; }

.sidebar { flex: none; display: flex; width: 301px; border-right: 1px solid #aab7b8; }
.side-scroll { position: relative; flex: 1; padding-top: 19px; overflow: hidden; color: #545b64; }
.side-scroll ul { padding-left: 40px; }
.side-scroll li { padding: 9px 0 8px; }
.side-scroll li:nth-child(odd) { padding-bottom: 9px; }
.side-scroll h2 {
  display: flex;
  align-items: center;
  gap: 11px;
  margin: 23px 0 10px;
  padding-left: 15px;
  font-size: 17px;
  font-weight: 600;
}
.current { color: #3a6fc4; font-weight: 600; }
.new { padding: 0 0 8px 50px; font-size: 15px; font-weight: 600; color: #3a6fc4; }
.new a { border-bottom: 1px dashed #3a6fc4; }
.side-x { position: absolute; top: 30px; right: 26px; color: #545b64; }

.content { flex: 1; min-width: 0; display: flex; flex-direction: column; }
.upper { flex: 1; display: flex; min-height: 0; background: #f2f4f4; }
.panel { flex: 1; min-width: 0; border-right: 1px solid #aab7b8; }
.panel > * { background: #fafafa; }

.panel-head { display: flex; align-items: flex-start; padding: 12px 24px 0; height: 58px; }
.panel-head h1 { font-size: 21px; font-weight: 600; line-height: 24px; margin: 3px 10px 0 0; }
.panel-head h1 span { font-weight: 400; color: #687078; }
.info { margin-top: 7px; font-size: 15px; font-weight: 600; color: #2f74c9; }
.actions { display: flex; gap: 10px; margin-left: auto; }

.btn {
  height: 34px;
  border: 1px solid #545b64;
  border-radius: 2px;
  background: #fff;
  color: #545b64;
  font-weight: 600;
}
.btn svg { margin-left: 14px; }
.refresh { width: 62px; }
.refresh svg { margin: 0; }
.connect { width: 122px; border-color: #d5dbdb; color: #aab7b8; }
.state { width: 195px; }
.act { width: 141px; }
.split-btn { display: flex; gap: 2px; }
.primary { border: 0; background: #f79700; color: #16191f; }
.launch { width: 192px; }
.more { width: 37px; }
.more svg { margin: 0; }

.filters { display: flex; align-items: flex-start; padding: 0 24px 7px; border-bottom: 1px solid #e6e9e9; }
.find {
  flex: 0 1 810px;
  display: flex;
  align-items: center;
  height: 36px;
  padding-left: 10px;
  border: 1px solid #687078;
  border-radius: 2px;
  background: #fff;
  color: #687078;
}
.find input { flex: 1; padding-left: 10px; font-size: 18px; outline: 0; }
.find input::placeholder { color: #687078; font-style: italic; opacity: 1; }
.any { position: relative; display: block; margin-left: 18px; width: 126px; height: 36px; border: 1px solid #687078; border-radius: 2px; background: #fff; color: #545b64; }
.any select { appearance: none; width: 100%; height: 33px; padding-left: 10px; color: #16191f; outline: 0; }
.any svg { position: absolute; right: 13px; top: 11px; pointer-events: none; }

.pager { display: flex; align-items: center; margin: -4px 0 0 auto; height: 34px; color: #545b64; }
.pager button { width: 35px; height: 34px; }
.pager .num { font-weight: 600; color: #16191f; }
.pager .prefs { width: 54px; margin: 0 -11px 0 6px; border-left: 1px solid #e6e9e9; }

.table-wrap { overflow: hidden; }
table { width: 100%; min-width: 1680px; table-layout: fixed; border-collapse: collapse; }
.c0 { width: 67px; }
.c1 { width: 175px; }
.c2 { width: 250px; }
.c3 { width: 200px; }
.c4 { width: 187px; }
.c5 { width: 188px; }
.c6 { width: 162px; }
.c7 { width: 213px; }
th { padding: 0; height: 40px; text-align: left; font-weight: 600; color: #545b64; border-bottom: 1px solid #e6e9e9; white-space: nowrap; }
th > div { display: flex; align-items: center; height: 25px; padding: 0 17px 0 20px; border-right: 1px solid #687078; }
th.pick > div { border-color: #e6e9e9; }
.sort { margin-left: auto; color: #687078; }
.pen { margin-left: 4px; }
td { height: 40px; padding: 0 0 0 20px; background: #fff; border-bottom: 1px solid #e6e9e9; white-space: nowrap; overflow: hidden; }
tbody tr:last-child td { border-bottom: 0; height: 42px; }
td a { color: #3a6fc4; }
.id { font-size: 18px; }
th.pick > div, td.pick { padding-left: 24px; }
.cell { display: flex; align-items: center; }
.good { color: #1d8102; gap: 5px; }
.z { color: #545b64; }
.good .z { margin-left: 9px; }
.good .z + .z { margin-left: 6px; }
.p { margin-left: 6px; color: #545b64; }

input[type="checkbox"] {
  appearance: none;
  display: block;
  width: 18px;
  height: 18px;
  border: 1px solid #687078;
  border-radius: 2px;
  background: #fff;
}

.panel > .hbar { display: flex; align-items: center; height: 22px; background: #f1f1f1; color: #505050; border-bottom: 1px solid #879596; box-shadow: 0 1px 1px #c5cccc; }
.hbar i { width: 44%; height: 17px; background: #c1c1c1; }
.left { margin: 0 7px; }
.right { margin: 0 8px 0 auto; }
.hbar .dim { color: #a3a3a3; }

.tools-strip { flex: none; width: 50px; padding: 12px 0 0 15px; background: #fff; color: #545b64; }

.split { flex: 0 0 452px; border-top: 1px solid #c5cccc; background: #fff; }
.handle { width: 16px; height: 9px; margin: 8px auto 0; border: solid #545b64; border-width: 2px 0; }
.split-head { display: flex; align-items: center; height: 32px; padding: 0 32px 0 25px; }
.split-head h2 { flex: 1; font-size: 21px; line-height: 24px; font-weight: 600; }
.split-head button { color: #545b64; height: 28px; }
.split-gear { padding-right: 11px; border-right: 1px solid #e6e9e9; }
.split-x { padding-left: 11px; }

.aws-footer {
  flex: none;
  display: flex;
  align-items: center;
  gap: 31px;
  height: 38px;
  padding: 0 20px;
  border-top: 1px solid #545b64;
  background: #252f3e;
  color: #fff;
  font-size: 14px;
  font-weight: 600;
}
.aws-footer .shell { display: flex; align-items: center; gap: 6px; }
.copy { margin-left: auto; margin-right: 6px; white-space: nowrap; }

/* Desktop taskbar */
.taskbar {
  flex: none;
  display: flex;
  align-items: center;
  height: 60px;
  padding: 0 24px 0 25px;
  border-top: 1px solid #b5c3cb;
  background: linear-gradient(90deg, #d6e5f2, #dbe4f1 25%, #d3e6f1 55%, #d8e8f0);
}
.taskbar button { position: relative; }
.weather { width: 34px; height: 44px; }
.apps { display: flex; align-items: center; margin-left: 340px; }
.apps button { width: 55px; height: 48px; }
.apps .open { width: 48px; margin: 0 4px; border-radius: 5px; background: #eef3fa; }
.running::after, .open::after {
  content: "";
  position: absolute;
  bottom: 0;
  width: 8px;
  height: 4px;
  border-radius: 2px;
  background: #858b90;
}
.open::after { width: 20px; background: #0078d4; }
.badge {
  position: absolute;
  top: 0;
  right: 5px;
  min-width: 20px;
  height: 20px;
  border-radius: 10px;
  font-size: 13px;
  line-height: 20px;
  text-align: center;
  color: #fff;
}
.weather .badge { right: -1px; }
.wide { min-width: 23px; right: 5px; }
.red { background: #c42b1c; }
.blue { background: #0078d7; }
.purple { background: #9d46b8; }
.face { position: absolute; top: 8px; right: 13px; }
.face.big { top: 0; right: 6px; }

.tray { display: flex; align-items: center; margin-left: auto; gap: 10px; }
.tray button:nth-child(-n+2) { margin-right: 11px; }
.tray button:nth-child(3) { margin-right: 8px; }
.tray .clock { flex-direction: column; align-items: flex-end; margin-left: 9px; font-size: 15px; color: #1f1f1f; }
.tray .copilot { margin-left: 12px; }
.pre { position: absolute; right: -1px; bottom: -5px; padding: 0 3px; border-radius: 2px; background: #ffc20e; font-size: 9px; line-height: 11px; font-weight: 700; }

/* Pen annotation drawn over the window */
.ink { position: absolute; left: 370px; top: 470px; pointer-events: none; }
```
